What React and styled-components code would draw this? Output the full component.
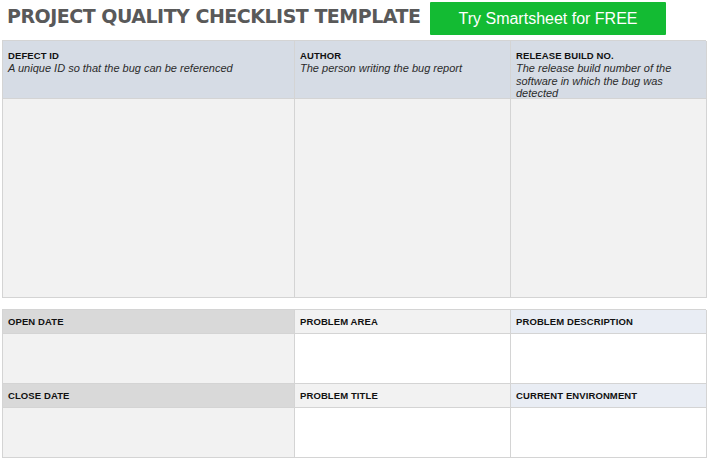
import styled, { createGlobalStyle } from "styled-components";

const GlobalStyle = createGlobalStyle`
  body {
    margin: 0;
    background: #ffffff;
    font-family: "Liberation Sans", Arial, sans-serif;
  }
  * {
    box-sizing: border-box;
  }
`;

const Page = styled.div`
  width: 708px;
  padding: 2px 2px 0 2px;
`;

const TitleBar = styled.div`
  display: flex;
  align-items: flex-start;
  height: 38px;
  padding-left: 5px;
`;

const Title = styled.h1`
  margin: 5px 0 0 0;
  font-family: "DejaVu Sans", "Liberation Sans", sans-serif;
  font-size: 19px;
  line-height: 1;
  font-weight: bold;
  color: #595959;
  letter-spacing: -0.5px;
  white-space: nowrap;
`;

const TryButton = styled.a`
  display: flex;
  align-items: center;
  justify-content: center;
  width: 236px;
  height: 33px;
  margin-left: auto;
  margin-right: 40px;
  background: #13bb33;
  color: #ffffff;
  font-family: "Liberation Sans", Arial, sans-serif;
  font-size: 16px;
  text-decoration: none;
  border-radius: 1px;
`;

const Table = styled.div`
  display: grid;
  grid-template-columns: 292px 216px 196px;
  grid-template-rows: ${(p) => p.rows};
  border-top: 1px solid #d4d4d4;
  border-left: 1px solid #d4d4d4;
  margin-top: ${(p) => p.gap || "0"};
`;

const Cell = styled.div`
  background: ${(p) => p.bg || "#ffffff"};
  border-right: 1px solid #d4d4d4;
  border-bottom: 1px solid #d4d4d4;
  padding: ${(p) => (p.slim ? "6px 5px 0" : "9px 5px 0")};
  font-family: "Liberation Sans", Arial, sans-serif;
  color: #111111;
`;

const Label = styled.div`
  font-size: 9.5px;
  font-weight: bold;
  line-height: 12px;
  letter-spacing: 0.1px;
`;

const Hint = styled.div`
  max-width: ${(p) => p.width || "none"};
  font-size: 11px;
  font-style: italic;
  line-height: 12.6px;
  color: #2b2b2b;
`;

const head = "#d6dce5";
const body = "#f2f2f2";

const topColumns = [
  { label: "DEFECT ID", hint: "A unique ID so that the bug can be referenced" },
  { label: "AUTHOR", hint: "The person writing the bug report" },
  {
    label: "RELEASE BUILD NO.",
    hint: "The release build number of the software in which the bug was detected",
    width: "160px",
  },
];

const bottomBlocks = [
  ["OPEN DATE", "PROBLEM AREA", "PROBLEM DESCRIPTION"],
  ["CLOSE DATE", "PROBLEM TITLE", "CURRENT ENVIRONMENT"],
];

const headColours = ["#d9d9d9", "#f2f2f2", "#e9edf4"];
const bodyColours = ["#f2f2f2", "#ffffff", "#ffffff"];

const App = () => {
  return (
    <Page>
      <GlobalStyle />
      <TitleBar>
        <Title>PROJECT QUALITY CHECKLIST TEMPLATE</Title>
        <TryButton href="#">Try Smartsheet for FREE</TryButton>
      </TitleBar>

      <Table rows="58px 199px">
        {topColumns.map((c) => (
          <Cell key={c.label} bg={head}>
            <Label>{c.label}</Label>
            <Hint width={c.width}>{c.hint}</Hint>
          </Cell>
        ))}
        {topColumns.map((c) => (
          <Cell key={c.label + "-body"} bg={body} />
        ))}
      </Table>

      <Table rows="24px 50px 24px 50px" gap="11px">
        {bottomBlocks.map((row) => [
          ...row.map((label, i) => (
            <Cell key={label} bg={headColours[i]} slim>
              <Label>{label}</Label>
            </Cell>
          )),
          ...row.map((label, i) => (
            <Cell key={label + "-body"} bg={bodyColours[i]} />
          )),
        ])}
      </Table>
    </Page>
  );
};

export default App;
